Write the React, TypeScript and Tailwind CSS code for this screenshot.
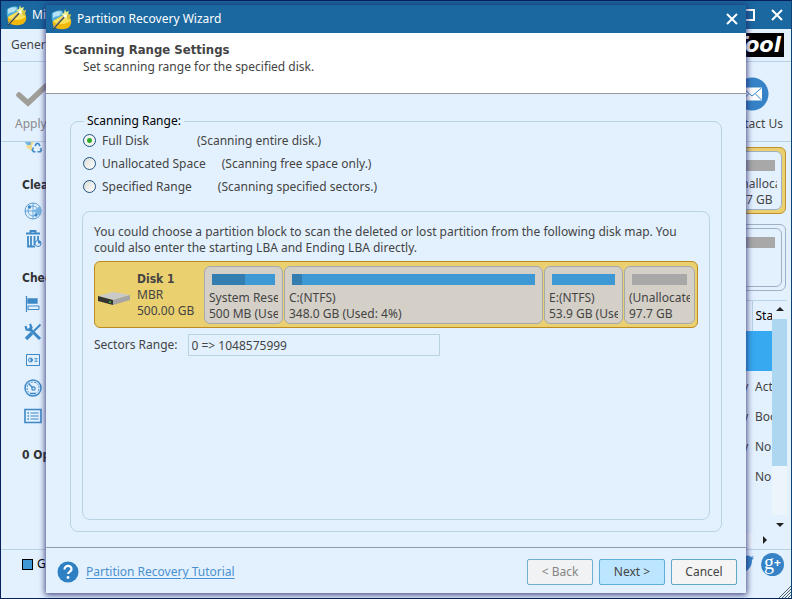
import type { ReactNode } from 'react'

type Partition = {
  name: string
  size: string
  width: string
  used: string
  bar: string
}

const PARTITIONS: Partition[] = [
  { name: 'System Reserved', size: '500 MB (Used: 52%)', width: 'w-[79px]', used: 'w-[33px]', bar: 'bg-[#3d98d4]' },
  { name: 'C:(NTFS)', size: '348.0 GB (Used: 4%)', width: 'flex-1', used: 'w-2.5', bar: 'bg-[#3d98d4]' },
  { name: 'E:(NTFS)', size: '53.9 GB (Used: 0%)', width: 'w-[79px]', used: 'w-0', bar: 'bg-[#3d98d4]' },
  { name: '(Unallocated)', size: '97.7 GB', width: 'w-[71px]', used: 'w-0', bar: 'bg-[#a8a8a8]' },
]

const RANGES = [
  { id: 'full', label: 'Full Disk', hint: '(Scanning entire disk.)', gap: 'ml-12' },
  { id: 'free', label: 'Unallocated Space', hint: '(Scanning free space only.)', gap: 'ml-4' },
  { id: 'specified', label: 'Specified Range', hint: '(Scanning specified sectors.)', gap: 'ml-[26px]' },
]

const ROWS = [
  { type: 'Primary', status: 'Active' },
  { type: 'Primary', status: 'Boot' },
  { type: 'Primary', status: 'None' },
  { type: 'Logical', status: 'None' },
]

function Logo() {
  return (
    <svg viewBox="0 0 22 22" className="size-[22px] shrink-0">
      <path d="M1 5 Q7 1 12 3 L11 11 L2 15 Q0 9 1 5Z" fill="#4fb0dc" />
      <path d="M2 5 Q7 2 11 4 L8 8 Q4 8 2 10Z" fill="#b5e2f4" />
      <path d="M2 13 L11 8 L20 12 Q21 17 17 20 Q9 23 3 19 Q1 16 2 13Z" fill="#efb80b" />
      <path d="M2 13 L11 8 L20 12 Q17 16 10 16 Q4 16 2 13Z" fill="#fbe158" />
      <path d="M14 1 l1 3 3-1 -1 3 3 2 -3 1 0 3 -3-2 -3 1 1-3 -2-2 3-1Z" fill="#e9ef8e" />
      <path d="M16 7 l4-1 -1 3 1 3 -4-1Z" fill="#d9c13a" />
      <path d="M2 21 L14 8" stroke="#40464a" strokeWidth="1.8" />
      <path d="M2 20 L13 8" stroke="#d7d9d4" strokeWidth=".6" />
      <circle cx="14" cy="8" r="1.5" fill="#fff" />
    </svg>
  )
}

function CloseIcon() {
  return (
    <svg viewBox="0 0 12 12" className="size-3">
      <path d="M1 1l10 10M11 1L1 11" stroke="#fff" strokeWidth="2" />
    </svg>
  )
}

function SideIcon({ children }: { children: ReactNode }) {
  return (
    <li className="flex h-7 items-center pl-[23px]">
      <svg viewBox="0 0 18 18" className="size-[18px]" fill="none" stroke="#3d89c7" strokeWidth="1.3">
        {children}
      </svg>
    </li>
  )
}

function SideHeading({ children }: { children: ReactNode }) {
  return (
    <h2 className="flex h-[37px] items-center pt-3 pl-[21px] font-['DejaVu_Sans_Condensed',sans-serif] font-bold whitespace-nowrap text-[#333]">
      {children}
    </h2>
  )
}

function Sidebar() {
  return (
    <nav className="w-40 shrink-0 overflow-hidden">
      <ul className="-mt-2.5">
        <SideIcon>
          <path d="M6 4h5l-3 4v6L2 10z" fill="#f3d98c" stroke="none" />
          <path d="M0 4h7v4H3z" fill="#72b5df" stroke="none" />
          <path
            d="M11 9l1.500-2.500h2L16 9M9.500 10.500L8.300 13l1.200 1.800h2M16.500 11l1 2-1.200 1.800H13.500"
            strokeWidth="1.600"
          />
        </SideIcon>
      </ul>
      <SideHeading>Clean Up</SideHeading>
      <ul>
        <SideIcon>
          <circle cx="9" cy="9" r="8" strokeWidth=".8" />
          <circle cx="9" cy="9" r="5" strokeWidth=".7" />
          <path d="M9 1v16M1 9h16" strokeWidth=".7" />
          <path d="M9 9l7-5q3 5 0 10z" fill="#79b5e3" stroke="none" />
          <circle cx="5.500" cy="5" r="1" fill="#2375b8" />
          <circle cx="12" cy="13" r="1" fill="#2375b8" />
        </SideIcon>
        <SideIcon>
          <path d="M2 3.500h14M6.500 3V1h5v2" strokeWidth="1.800" />
          <path d="M4 6v10.500h7M14 6v4M7 6v10M10.500 6v9" strokeWidth="1.800" />
          <circle cx="14" cy="13.500" r="3" fill="#e3f1ff" strokeWidth="1" />
          <path d="M14 13.500v-3a3 3 0 0 1 3 3z" fill="#3d89c7" stroke="none" />
        </SideIcon>
      </ul>
      <SideHeading>Check Partition</SideHeading>
      <ul>
        <SideIcon>
          <path d="M2.500 1v16" />
          <path d="M4 4h9v4H4z" fill="#3d89c7" />
          <path d="M4 11h11v3.500H4z" strokeWidth="1" />
        </SideIcon>
        <SideIcon>
          <path d="M5 5l11 11" strokeWidth="3" />
          <path d="M1.500 3l1 3.500 3 .5 2-2.500L6 1" strokeWidth="2.200" />
          <path d="M16.500 1.500L10 8" strokeWidth="2" />
          <path d="M8 10l-6 6" strokeWidth="3.600" />
        </SideIcon>
        <SideIcon>
          <path d="M2.500 3.500h13v11h-13z" strokeWidth="1" />
          <circle cx="6.500" cy="9" r="2" strokeWidth="1" />
          <path d="M6.500 9V7a2 2 0 0 1 0 4z" fill="#3d89c7" stroke="none" />
          <path d="M10.500 7.500h3M10.500 9h3M10.500 10.500h3" strokeWidth=".8" />
        </SideIcon>
        <SideIcon>
          <circle cx="9" cy="9" r="8" strokeWidth="1.500" />
          <path d="M5 13.500a6 6 0 1 1 8 0" strokeWidth="1" strokeDasharray="2 1" />
          <path d="M4.500 4.500L9 9M6 14.500h6" strokeWidth="1.400" />
          <circle cx="9.500" cy="9.500" r="1.700" strokeWidth="1.200" />
        </SideIcon>
        <SideIcon>
          <path d="M1 2.500h16v13H1z" strokeWidth="1.600" />
          <path d="M3.500 6h1.500M3.500 9h1.500M3.500 12h1.500" strokeWidth="1.600" />
          <path d="M6.500 6h8M6.500 9h8M6.500 12h8" strokeWidth="1" />
        </SideIcon>
      </ul>
      <SideHeading>0 Operations Pending</SideHeading>
    </nav>
  )
}

function DiskCard({ selected, children }: { selected?: boolean; children?: ReactNode }) {
  return (
    <div
      className={`flex h-[67px] rounded-md border p-[3px] ${
        selected ? 'border-[#c1912e] bg-[#ebd070]' : 'border-[#9fb0c4]'
      }`}
    >
      <div className="flex-1 overflow-hidden rounded-md border border-[#9fb0c4] bg-[#e3f1ff] px-1">
        <div className="mt-2 mr-0.5 h-[11px] bg-[#a8a8a8]" />
        {children}
      </div>
    </div>
  )
}

function PartitionTable() {
  return (
    <div className="mt-[9px] flex flex-1 border-t border-[#b9d3e6]">
      <div className="flex flex-1 flex-col">
        <table className="w-full table-fixed border-collapse text-left whitespace-nowrap text-[#444]">
          <thead>
            <tr className="h-[30px] text-black">
              <th className="border-r border-[#b9d3e6] pr-[3px] font-normal">
                <div className="ml-auto w-[45px]">Type</div>
              </th>
              <th className="w-5 pl-[3px] font-normal">
                <div className="overflow-hidden">Status</div>
              </th>
            </tr>
          </thead>
          <tbody>
            <tr className="h-10 bg-[#37a9f0]">
              <td />
              <td />
            </tr>
            {ROWS.map((row, i) => (
              <tr key={i} className="h-[30px]">
                <td className="pt-0.5 pr-[3px]">
                  <div className="ml-auto w-[45px]">{row.type}</div>
                </td>
                <td className="pt-0.5 pl-[3px]">
                  <div className="overflow-hidden">{row.status}</div>
                </td>
              </tr>
            ))}
          </tbody>
        </table>
        <div className="mt-auto flex h-[18px] items-center justify-end pr-[5px]">
          <span className="h-3.5 flex-1 bg-[#edf5fc]" />
          <svg viewBox="0 0 14 10" className="h-2.5 w-3.5">
            <path d="M10 1l4 4-4 4z" fill="#222" />
          </svg>
        </div>
      </div>
      <div className="flex w-[15px] flex-col items-center">
        <svg viewBox="0 0 8 18" className="h-[18px] w-2">
          <path d="M0 10l4-4 4 4z" fill="#222" />
        </svg>
        <div className="h-[147px] w-full bg-[#add7f1]" />
        <div className="w-full flex-1 bg-[#edf5fc]" />
        <svg viewBox="0 0 8 34" className="h-[34px] w-2">
          <path d="M0 8l4 4 4-4z" fill="#222" />
        </svg>
      </div>
    </div>
  )
}

function MainWindow() {
  return (
    <div className="flex min-h-screen flex-col overflow-hidden border border-[#06205c] border-r-[#0c4379] bg-[#e3f1ff]">
      <header className="flex h-7 shrink-0 items-center bg-[#1a689f] pr-2 pl-[5px] text-white">
        <Logo />
        <h1 className="ml-1 flex-1">MiniTool Partition Wizard</h1>
        <button type="button" aria-label="Maximize" className="mr-4 size-3 border-2 border-white" />
        <button type="button" aria-label="Close">
          <CloseIcon />
        </button>
      </header>
      <div className="flex h-[33px] shrink-0 items-center justify-between border-b border-[#b9d3e6] pr-[7px] pl-2.5">
        <button type="button">General</button>
        <span className="flex h-6 items-center bg-black px-[3px] font-['DejaVu_Sans',sans-serif] text-[21px] font-bold text-white italic">
          MiniTool
        </span>
      </div>
      <div className="flex h-20 shrink-0 justify-between border-b border-[#b9d3e6] pr-2 pl-3.5">
        <button type="button" className="flex flex-col items-start pt-[15px] text-[#8b8b8b]">
          <svg viewBox="0 0 34 34" className="size-[34px]">
            <path d="M4 18l9 8L31 9" fill="none" stroke="#a09e98" strokeWidth="5.500" strokeLinecap="round" />
          </svg>
          <span className="mt-[5px]">Apply</span>
        </button>
        <button type="button" className="flex flex-col items-center pt-[15px]">
          <svg viewBox="0 0 34 34" className="size-[34px]">
            <circle cx="17" cy="17" r="16.500" fill="#3583c6" />
            <path d="M7 10.500h20v13H7z" fill="#fff" />
            <path d="M7.500 11l9.500 8 9.500-8M7.500 23l6-6M26.500 23l-6-6" fill="none" stroke="#3583c6" />
          </svg>
          <span className="mt-[5px]">Contact Us</span>
        </button>
      </div>
      <div className="flex flex-1">
        <Sidebar />
        <main className="flex min-w-0 flex-1 flex-col pt-[5px] pr-1">
          <div className="flex flex-col gap-2.5 pr-px">
            <DiskCard selected>
              <div className="mt-[5px] ml-auto w-12 overflow-hidden whitespace-nowrap">
                <p>(Unallocated)</p>
                <p>97.7 GB</p>
              </div>
            </DiskCard>
            <DiskCard />
          </div>
          <PartitionTable />
        </main>
      </div>
      <footer className="relative flex h-[49px] shrink-0 justify-between border-t border-[#b9d3e6] pt-[3px] pr-[7px] pl-[21px] text-black">
        <span className="flex h-[22px] items-center gap-1">
          <span className="size-[11px] border border-black bg-[#3d98d4]" />
          GPT/Logical
        </span>
        <span className="flex gap-1.5">
          <svg viewBox="0 0 24 24" className="size-[22px]">
            <path
              d="M23 5c-1 .4-1.700.600-2.600.700 1-.6 1.700-1.500 2-2.500-1 .5-1.900.900-3 1.100a4.700 4.700 0 0 0-8 4.300C7.500 8.400 4 6.500 1.700 3.700c-1.300 2-.6 4.800 1.400 6.200-.8 0-1.500-.2-2.100-.6 0 2.300 1.600 4.200 3.800 4.700-.7.200-1.400.200-2.100.1.600 1.900 2.300 3.200 4.400 3.300A9.500 9.500 0 0 1 0 19.500C10 25 21 19 20.700 7.500 21.600 6.800 22.400 6 23 5z"
              fill="#3583c6"
            />
          </svg>
          <span className="flex size-[23px] items-center justify-center rounded-full bg-[#3583c6] text-white">
            <span className="pb-1.5 font-['Liberation_Serif',serif] text-[20px]">g</span>
            <span className="pb-1 text-[12px] font-bold">+</span>
          </span>
        </span>
        <svg viewBox="0 0 12 12" className="absolute right-0 bottom-0 size-3">
          <path d="M0 12L12 0M3 12l9-9M6 12l6-6M9 12l3-3" stroke="#4f6070" />
        </svg>
      </footer>
    </div>
  )
}

function PartitionBlock({ name, size, width, used, bar }: Partition) {
  return (
    <div className={`${width} h-[58px] overflow-hidden rounded-md border border-[#a5a9a9] bg-[#d4d0c8] px-1`}>
      <div className={`mx-[3px] mt-[7px] h-[11px] ${bar}`}>
        <div className={`${used} h-full bg-[#337eae]`} />
      </div>
      <div className="mt-[5px] overflow-hidden whitespace-nowrap">
        <p>{name}</p>
        <p>{size}</p>
      </div>
    </div>
  )
}

function DiskMap() {
  return (
    <div className="mt-[5px] flex h-[67px] items-center rounded-md border border-[#bd8b22] bg-[#ebd070] pr-0.5">
      <div className="flex w-[109px] shrink-0 items-center gap-[7px] pl-[3px]">
        <svg viewBox="0 0 32 14" className="mt-2 h-3.5 w-8 shrink-0">
          <path d="M0 4L15 0l17 3-17 5z" fill="#c9c9c7" />
          <path d="M15 8l17-5v5l-17 5z" fill="#a5a5a5" />
          <path d="M0 4l15 4v5L0 9z" fill="#333430" />
          <path d="M12 9v2" stroke="#37c23a" strokeWidth="1.500" />
        </svg>
        <div className="whitespace-nowrap">
          <p className="font-['DejaVu_Sans_Condensed',sans-serif] font-bold">Disk 1</p>
          <p>MBR</p>
          <p>500.00 GB</p>
        </div>
      </div>
      <div className="flex min-w-0 flex-1 gap-px">
        {PARTITIONS.map((p) => (
          <PartitionBlock key={p.name} {...p} />
        ))}
      </div>
    </div>
  )
}

function WizardButton({ children, className }: { children: ReactNode; className: string }) {
  return (
    <button type="button" className={`h-[26px] w-[66px] rounded-xs border ${className}`}>
      {children}
    </button>
  )
}

function RecoveryWizard() {
  return (
    <section
      role="dialog"
      aria-labelledby="wizard-title"
      className="absolute inset-x-[46px] top-[5px] bottom-1.5 flex flex-col bg-[#e3f1ff] shadow-[0_1px_6px_1px_rgba(30,30,100,0.800)]"
    >
      <header className="flex h-7 shrink-0 items-center bg-[#1a689f] pr-2 pl-[5px] text-white">
        <Logo />
        <h1 id="wizard-title" className="ml-1 flex-1">
          Partition Recovery Wizard
        </h1>
        <button type="button" aria-label="Close wizard">
          <CloseIcon />
        </button>
      </header>
      <div className="h-[61px] shrink-0 border-b border-[#999] bg-white pt-2 pl-[18px]">
        <h2 className="font-['DejaVu_Sans_Condensed',sans-serif] text-[13px] leading-[18px] font-bold">
          Scanning Range Settings
        </h2>
        <p className="pl-[19px]">Set scanning range for the specified disk.</p>
      </div>

      <form id="scan-form" className="flex flex-1 flex-col px-6 pt-[19px] pb-[15px]">
        <fieldset className="flex flex-1 flex-col rounded-lg border border-[#b9d3e3] px-[11px] pb-[11px]">
          <legend className="ml-0.5 px-[3px] text-black">Scanning Range:</legend>
          <div className="pl-px">
            {RANGES.map((r) => (
              <label key={r.id} className="flex h-[23px] items-center">
                <input
                  type="radio"
                  name="range"
                  value={r.id}
                  defaultChecked={r.id === 'full'}
                  className="mr-1.5 size-[13px] appearance-none rounded-full border border-[#1d5281] bg-[linear-gradient(135deg,#dcdcd7,#fff)] checked:bg-[radial-gradient(circle,#2dad2d_0_2px,#f3f3f0_3px)]"
                />
                <span>{r.label}</span>
                <span className={r.gap}>{r.hint}</span>
              </label>
            ))}
          </div>
          <div className="mt-[13px] flex-1 rounded-lg border border-[#b9d3e3] p-[11px] pt-3">
            <p>
              You could choose a partition block to scan the deleted or lost partition from the following disk map. You
              could also enter the starting LBA and Ending LBA directly.
            </p>
            <DiskMap />
            <div className="mt-1.5 flex items-center gap-2.5">
              <label htmlFor="sectors">Sectors Range:</label>
              <input
                id="sectors"
                defaultValue="0 => 1048575999"
                className="h-[22px] w-[252px] border border-[#b9d3e3] px-[3px]"
              />
            </div>
          </div>
        </fieldset>
      </form>

      <footer className="flex h-[46px] shrink-0 items-center border-t border-[#8f9ba5] pt-0.5 pr-[9px] pl-[11px]">
        <svg viewBox="0 0 22 22" className="size-[22px]">
          <circle cx="11" cy="11" r="10.500" fill="#2f80c3" />
          <path d="M7.500 8.500c0-5 7.500-4.500 7 0-.3 2-3.400 2.200-3.400 4.500" fill="none" stroke="#fff" strokeWidth="2.200" />
          <circle cx="11" cy="16.500" r="1.400" fill="#fff" />
        </svg>
        <a href="#tutorial" className="ml-[7px] text-[#4a90cf] underline underline-offset-2">
          Partition Recovery Tutorial
        </a>
        <div className="ml-auto flex gap-1.5">
          <WizardButton className="border-[#6fb0d0] bg-[#f0f2f4] text-[#858585]">&lt; Back</WizardButton>
          <WizardButton className="border-[#5fb0d8] bg-[#bce6ff]">Next &gt;</WizardButton>
          <WizardButton className="border-[#5fa8cc] bg-[#f4f4f4]">Cancel</WizardButton>
        </div>
      </footer>
    </section>
  )
}

export default function App() {
  return (
    <div className="relative min-h-screen overflow-hidden font-['Noto_Sans',sans-serif] text-[12px] leading-4 text-[#444]">
      <MainWindow />
      <RecoveryWizard />
    </div>
  )
}
